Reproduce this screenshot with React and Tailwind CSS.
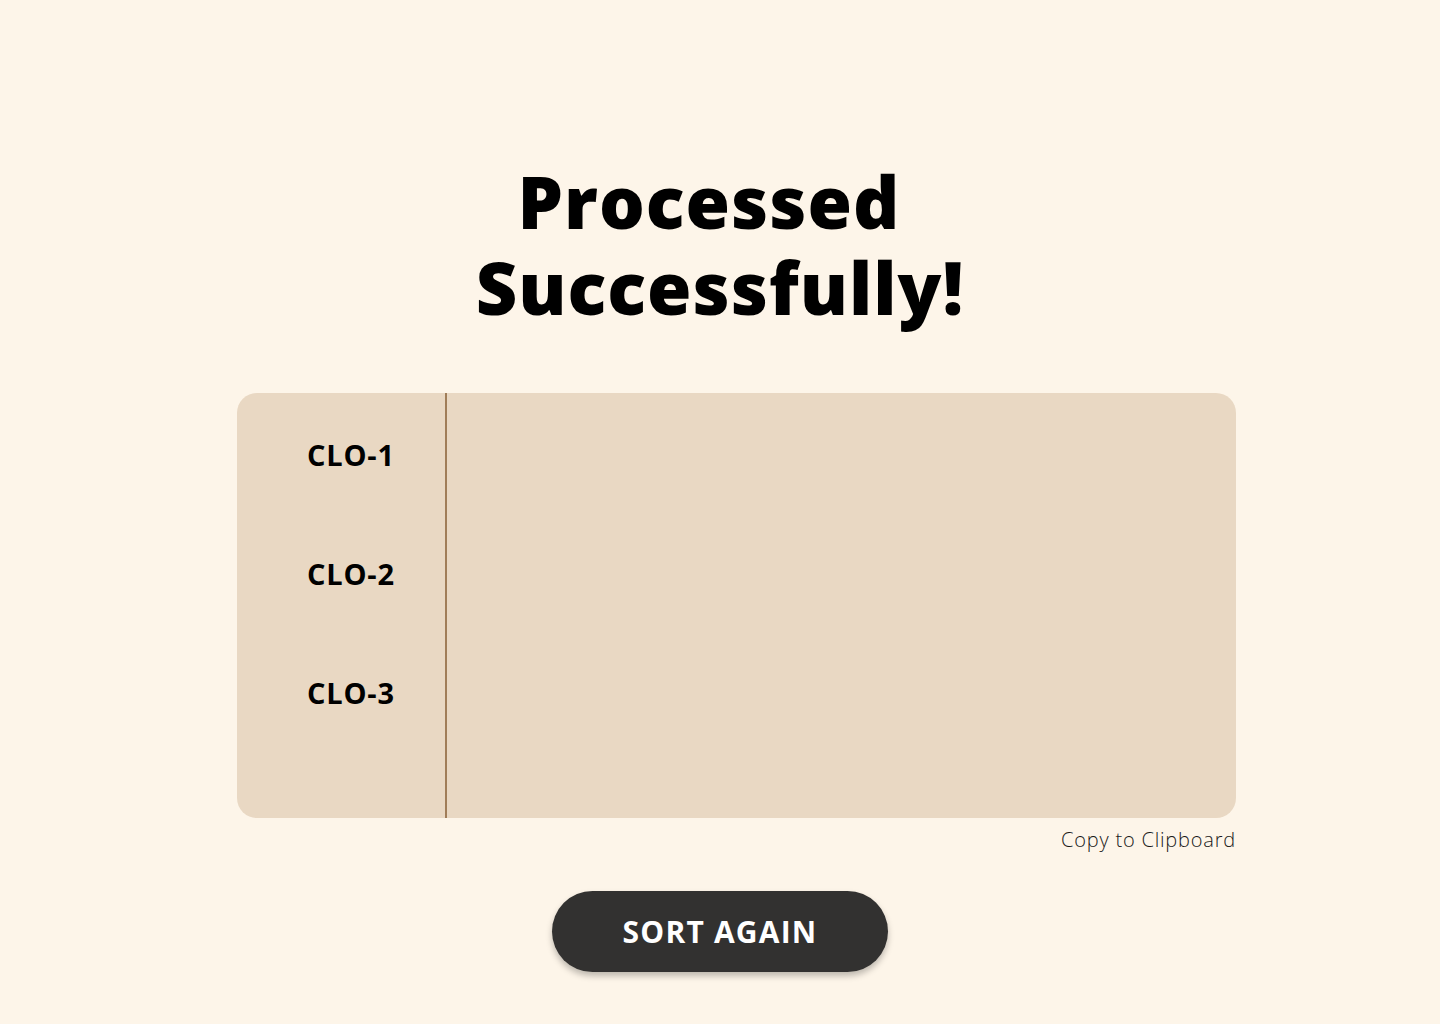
export default function App() {
  const clos = ['CLO-1', 'CLO-2', 'CLO-3']

  return (
    <div
      className="min-h-screen w-full bg-[#fdf5e9] flex flex-col items-center pt-[158px] text-black"
      style={{ fontFamily: '"Open Sans", "DejaVu Sans", sans-serif' }}
    >
      <h1 className="text-center text-[72px] font-extrabold leading-[86px] tracking-[1px]">
        <div className="pr-[22px]">Processed</div>
        <div>Successfully!</div>
      </h1>

      {/* Results panel */}
      <div className="mt-[63px] w-[999px] ml-[33px]">
        <div className="flex h-[425px] rounded-[20px] bg-[#e9d8c3] overflow-hidden">
          <div className="w-[210px] border-r-2 border-[#a07d58] pt-[46px] pl-[70px] flex flex-col gap-[87px]">
            {clos.map((c) => (
              <div key={c} className="text-[29px] font-bold leading-[32px] tracking-[0.8px]">
                {c}
              </div>
            ))}
          </div>
          <div className="flex-1" />
        </div>
        <div className="mt-[10px] text-right text-[20px] font-light leading-[24px] tracking-[0.8px] text-[#1a1a1a]">
          Copy to Clipboard
        </div>
      </div>

      <button className="mt-[39px] w-[336px] h-[81px] rounded-full bg-[#323130] text-white text-[30px] font-bold tracking-[1.2px] shadow-[0_4px_6px_rgba(0,0,0,0.25)]">
        SORT AGAIN
      </button>
    </div>
  )
}
